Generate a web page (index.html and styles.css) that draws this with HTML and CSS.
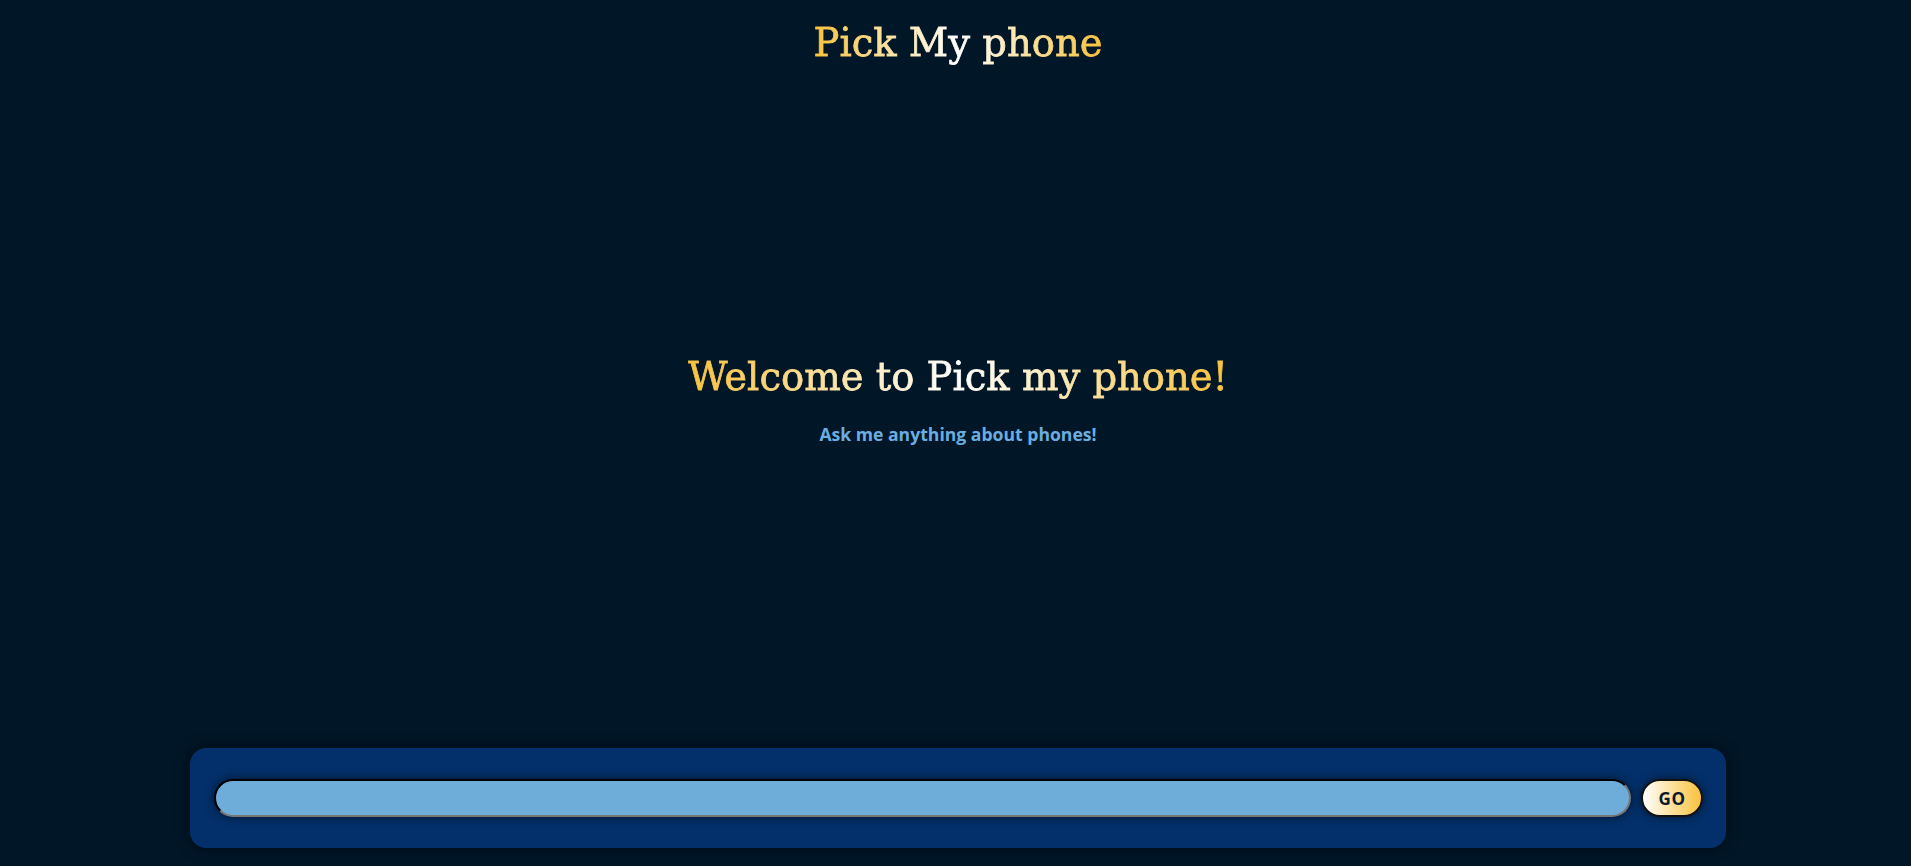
FILE: index.html
```html
<!DOCTYPE html>
<html lang="en">
<head>
<meta charset="utf-8">
<title>Pick My phone</title>
<link rel="stylesheet" href="styles.css">
</head>
<body>
<div class="app">
  <header class="header">
    <h1 class="brand gradient-text">Pick My phone</h1>
  </header>
  <main class="main">
    <h2 class="welcome gradient-text">Welcome to Pick my phone!</h2>
    <p class="subtitle">Ask me anything about phones!</p>
  </main>
  <footer class="composer">
    <input class="prompt" type="text" aria-label="Ask a question">
    <button class="go" type="button">GO</button>
  </footer>
</div>
</body>
</html>
```

FILE: styles.css
```css
* { box-sizing: border-box; }
html, body {
  margin: 0;
  height: 100%;
}
body {
  background: #011627;
  font-family: "Open Sans", "Noto Sans", sans-serif;
}
.app {
  height: 100vh;
  display: flex;
  flex-direction: column;
  padding-left: 5px;
}
.header {
  padding-top: 19px;
  display: flex;
  justify-content: center;
}
.gradient-text {
  background: linear-gradient(90deg, #f9c23c 0%, #ffffff 50%, #f9c23c 100%);
  -webkit-background-clip: text;
  background-clip: text;
  color: transparent;
  -webkit-text-stroke: 0.8px transparent;
}
.brand {
  margin: 0;
  font-family: "DejaVu Serif", "Liberation Serif", serif;
  font-weight: 400;
  font-size: 38.5px;
  line-height: 48px;
}
.main {
  flex: 1;
  display: flex;
  flex-direction: column;
  align-items: center;
  justify-content: center;
  padding-bottom: 16px;
}
.welcome {
  margin: 0;
  font-family: "DejaVu Serif", "Liberation Serif", serif;
  font-weight: 400;
  font-size: 38.5px;
  line-height: 48px;
}
.subtitle {
  margin: 21px 0 0;
  color: #6cade0;
  font-weight: 700;
  font-size: 17.6px;
  line-height: 24px;
}
.composer {
  width: 1536px;
  height: 100px;
  margin: 0 auto 18px;
  background: #03306a;
  border-radius: 16px;
  box-shadow: 0 0 14px rgba(0, 0, 0, 0.55);
  display: flex;
  align-items: center;
  gap: 10px;
  padding: 0 23px 0 24px;
}
.prompt {
  flex: 1;
  height: 38px;
  border-radius: 19px;
  border: 2px inset #767676;
  border-top-color: #222;
  border-left-color: #222;
  border-bottom-color: #777;
  border-right-color: #777;
  background: #6eadd9;
  box-shadow: 0 0 10px rgba(0, 0, 0, 0.6);
  outline: none;
}
.go {
  width: 62px;
  height: 38px;
  border-radius: 19px;
  border: 2px solid #111;
  background: linear-gradient(90deg, #ffffff 0%, #f9c23c 100%);
  color: #0b1a2e;
  font-family: "Open Sans", sans-serif;
  font-weight: 700;
  font-size: 17px;
  letter-spacing: 0.5px;
  box-shadow: 0 0 8px rgba(0, 0, 0, 0.6);
  cursor: pointer;
}
```
